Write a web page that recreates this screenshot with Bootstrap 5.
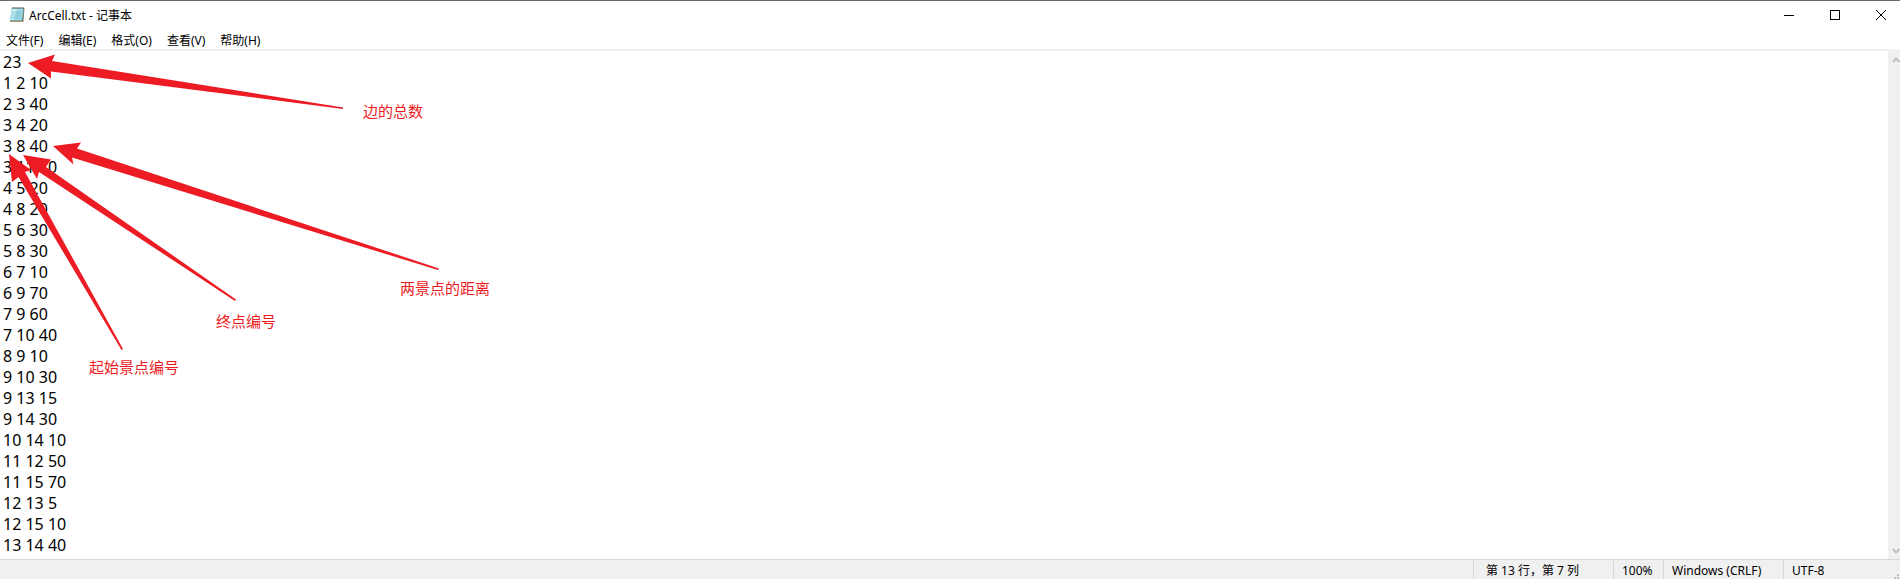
<!DOCTYPE html>
<html lang="zh-CN">
<head>
<meta charset="utf-8">
<meta name="viewport" content="width=device-width, initial-scale=1">
<title>ArcCell.txt - 记事本</title>
<link href="https://cdn.jsdelivr.net/npm/bootstrap@5.3.0/dist/css/bootstrap.min.css" rel="stylesheet">
<style>
  body { font-family: "Noto Sans", "Noto Sans CJK SC", sans-serif; font-size: 12px; line-height: 16px; color: #000; background: #fff; }
  .app-window { border-top: 1px solid #6b6b6b; }
  .title-bar { height: 28px; padding-left: 9px; }
  .title-text { margin-left: 4px; padding-top: 2px; }
  .win-buttons { gap: 8px; }
  .win-btn { width: 38px; height: 28px; line-height: 1; }
  .menu-row { height: 20px; gap: 15px; padding: 4px 0 0 6px; }
  .menu-row a { color: #000; }
  .editor-row { border-top: 2px solid #f0f0f0; }
  .editor { resize: none; outline: 0; overflow: hidden; padding: 1px 3px 0; font-size: 16px; line-height: 21px; color: #000; }
  .scroll-track { width: 12px; background: #f0f0f0; padding: 5px 0 4px; }
  .notes { width: 520px; height: 340px; pointer-events: none; }
  .note { font-size: 15px; }
  .status-bar { height: 20px; background: #f0f0f0; border-top: 1px solid #d7d7d7; }
  .status-cell { border-left: 1px solid #d7d7d7; padding-left: 8px; margin-top: 1px; line-height: 20px; }
  .cell-pos { width: 140px; padding-left: 12px; }
  .cell-zoom { width: 50px; }
  .cell-eol { width: 120px; }
  .cell-enc { width: 117px; }
</style>
</head>
<body>
<div class="app-window d-flex flex-column vh-100 overflow-hidden">
  <header class="title-bar d-flex align-items-center flex-shrink-0">
    <svg width="16" height="18" viewBox="0 0 16 18" aria-hidden="true">
      <path d="M3 2h12.500l-1 14H1z" fill="#b98f5a"/>
      <path d="M3 2h12l-1 13H1z" fill="#3f7f8f"/>
      <path d="M3 2h11.500l-1.500 12.500H0.500z" fill="#9fd8e6"/>
      <path d="M3 3h5L5 14H1z" fill="#c5edf5"/>
      <path d="M3 6h10M2.500 8h10M2 10h10M2 12h10" stroke="#6eb8ca" stroke-width=".6"/>
      <path d="M4 1v2M6 1v2M8 1v2M10 1v2M12 1v2M14 1v2" stroke="#555" stroke-width="1"/>
    </svg>
    <span class="title-text flex-grow-1">ArcCell.txt - 记事本</span>
    <div class="win-buttons d-flex">
      <button class="win-btn btn p-0 border-0 rounded-0" type="button" aria-label="最小化"><svg class="d-block mx-auto" width="10" height="10" shape-rendering="crispEdges"><path d="M0 5.500h10" stroke="#000"/></svg></button>
      <button class="win-btn btn p-0 border-0 rounded-0" type="button" aria-label="最大化"><svg class="d-block mx-auto" width="10" height="10" shape-rendering="crispEdges"><path d="M.5 .5h9v9h-9z" fill="none" stroke="#000"/></svg></button>
      <button class="win-btn btn p-0 border-0 rounded-0" type="button" aria-label="关闭"><svg class="d-block mx-auto" width="10" height="10"><path d="M0 0l10 10M10 0L0 10" stroke="#000"/></svg></button>
    </div>
  </header>
  <nav class="menu-row d-flex align-items-center flex-shrink-0">
    <a class="text-decoration-none" href="#">文件(F)</a>
    <a class="text-decoration-none" href="#">编辑(E)</a>
    <a class="text-decoration-none" href="#">格式(O)</a>
    <a class="text-decoration-none" href="#">查看(V)</a>
    <a class="text-decoration-none" href="#">帮助(H)</a>
  </nav>
  <main class="editor-row d-flex flex-grow-1 position-relative">
    <textarea class="editor flex-grow-1 border-0" aria-label="文本编辑器" spellcheck="false">23
1 2 10
2 3 40
3 4 20
3 8 40
3 11 70
4 5 20
4 8 20
5 6 30
5 8 30
6 7 10
6 9 70
7 9 60
7 10 40
8 9 10
9 10 30
9 13 15
9 14 30
10 14 10
11 12 50
11 15 70
12 13 5
12 15 10
13 14 40</textarea>
    <div class="scroll-track d-flex flex-column justify-content-between align-items-end">
      <svg width="8" height="8"><path d="M1 6l3-3.500L7.500 6" fill="none" stroke="#bfbfbf" stroke-width="2"/></svg>
      <svg width="8" height="8"><path d="M1 2l3 3.500L7.500 2" fill="none" stroke="#bfbfbf" stroke-width="2"/></svg>
    </div>
    <svg class="notes position-absolute top-0 start-0" viewBox="0 51 520 340" aria-label="批注">
      <g fill="#ed1c24">
        <path d="M28 63L55 54.500L52 61L343 107.500V109L51 71.500V78.500z"/>
        <path d="M53 146L81 142.500L77 148.500L439 268.500L438 270L72 157.500L73.500 164.500z"/>
        <path d="M23 155L51 159.500L46 167L236 299.500L235 301L39 172L37 179z"/>
        <path d="M9 154L31 170L25 172L123 349L121.500 350L18.500 177L12 182z"/>
      </g>
      <g class="note" fill="#ed1c24">
        <text x="363" y="117">边的总数</text>
        <text x="400" y="294">两景点的距离</text>
        <text x="216" y="327">终点编号</text>
        <text x="89" y="373">起始景点编号</text>
      </g>
    </svg>
  </main>
  <footer class="status-bar d-flex justify-content-end flex-shrink-0 position-relative">
    <div class="status-cell cell-pos">第 13 行，第 7 列</div>
    <div class="status-cell cell-zoom">100%</div>
    <div class="status-cell cell-eol">Windows (CRLF)</div>
    <div class="status-cell cell-enc">UTF-8</div>
    <svg class="position-absolute bottom-0 end-0" width="6" height="5" shape-rendering="crispEdges"><path d="M3 0h2v2h-2zM0 3h2v2H0zM3 3h2v2h-2z" fill="#bfbfbf"/></svg>
  </footer>
</div>
<script src="https://cdn.jsdelivr.net/npm/bootstrap@5.3.0/dist/js/bootstrap.bundle.min.js"></script>
</body>
</html>
